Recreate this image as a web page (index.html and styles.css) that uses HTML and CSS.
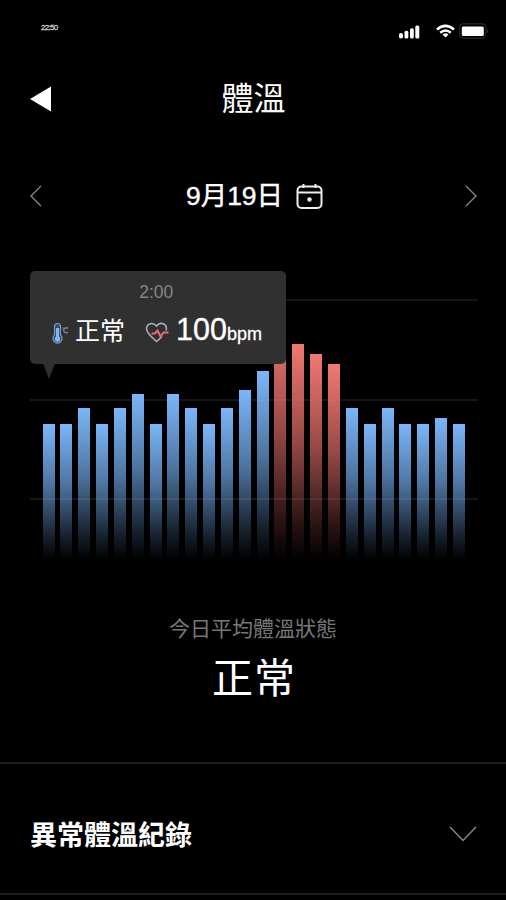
FILE: index.html
```html
<!DOCTYPE html>
<html lang="zh-Hant">
<head>
<meta charset="utf-8">
<title>體溫</title>
<link rel="stylesheet" href="styles.css">
</head>
<body>
<main class="screen">
  <div class="status">
    <span class="time">22:50</span>
    <div class="status-icons">
      <svg class="signal" width="22" height="15" viewBox="0 0 22 15" fill="#fff"><rect x="1" y="9" width="4" height="5.500" rx="1.800"/><rect x="6.500" y="6.800" width="3.800" height="7.700" rx="1.500"/><rect x="12" y="4.300" width="3.800" height="10.200" rx="1.500"/><rect x="17.300" y="1.500" width="4" height="13" rx="1.500"/></svg>
      <svg class="wifi" width="19" height="14" viewBox="0 0 19 14" fill="none" stroke="#fff" stroke-width="2.500"><path d="M1 5.500Q9.500-1.800 18 5.500M4.200 8.700Q9.500 4.300 14.800 8.700"/><path d="M6.500 10.500Q9.500 8 12.500 10.500L9.500 13.500Z" fill="#fff" stroke="none"/></svg>
      <svg class="battery" width="30" height="16" viewBox="0 0 30 16"><rect x=".7" y=".7" width="26" height="14.600" rx="4" fill="none" stroke="#222" stroke-width="1.400"/><rect x="2.800" y="3.500" width="22" height="9.500" rx="1.500" fill="#fff"/><path d="M28.300 5.800q1.600 2.200 0 4.400z" fill="#555"/></svg>
    </div>
  </div>
  <header class="header">
    <svg class="back" width="22" height="26" viewBox="0 0 22 26"><path d="M0 13 21 .5v25z" fill="#fff"/></svg>
    <h1>體溫</h1>
  </header>
  <nav class="date-nav">
    <svg width="12" height="22" viewBox="0 0 12 22"><path d="M11 1 1 11 11 21"/></svg>
    <div class="date"><span>9月19日</span>
      <svg class="calendar" width="27" height="27" viewBox="0 0 27 27"><rect x="1.500" y="3.500" width="24" height="21.500" rx="4"/><path d="M1.500 9.500h24M7.500 1v4M19.500 1v4"/><circle cx="13.500" cy="16.500" r="2.200" fill="#eee" stroke="none"/></svg>
    </div>
    <svg width="12" height="22" viewBox="0 0 12 22"><path d="M1 1 11 11 1 21"/></svg>
  </nav>
  <section class="chart">
    <div class="grid-lines"><i></i><i></i><i></i></div>
    <div class="bars" id="bars"></div>
    <div class="tooltip">
      <div class="tip-time">2:00</div>
      <div class="tip-row">
        <svg class="thermo" width="18" height="23" viewBox="0 0 18 23"><path d="M2.500 13V4.500a3 3 0 0 1 6 0V13a4.600 4.600 0 1 1-6 0Z" fill="#344d69" stroke="#8ba0b8" stroke-width="1.100"/><path d="M5.500 6v9" stroke="#79b9ff" stroke-width="3"/><circle cx="5.500" cy="17" r="2.700" fill="#79b9ff"/><path d="M16 6.500a2.500 2.500 0 1 0 0 3.500M10.500 6h1" fill="none" stroke="#7d8795" stroke-width="1.300"/></svg>
        <span class="tip-state">正常</span>
        <svg class="heart" width="25" height="22" viewBox="0 0 25 22" fill="none"><path d="M21 8.500C23 2 15.500-1 11.500 4 8 0 2 1 1.500 6.500c0 4.500 5 8.500 10 13 2.500-2 4-3.300 5.500-5" stroke="#a7b4cb" stroke-width="1.500"/><path d="M6.500 11.500h3.500l2.500-3 3 6 3-4H23.500" stroke="#f26969" stroke-width="2"/></svg>
        <span class="tip-value">100<small>bpm</small></span>
      </div>
    </div>
  </section>
  <section class="summary">
    <p>今日平均體溫狀態</p>
    <strong>正常</strong>
  </section>
  <section class="records">
    <h2>異常體溫紀錄</h2>
    <svg width="28" height="16" viewBox="0 0 28 16"><path d="M1 1 14 14.500 27 1"/></svg>
  </section>
</main>
<script src="chart.js"></script>
</body>
</html>
```
FILE: styles.css
```css
* { box-sizing: border-box; }
body { margin: 0; background: #000; color: #fff; font-family: "Liberation Sans", "Noto Sans CJK TC", sans-serif; }
svg { display: block; flex: none; }
.screen { width: 506px; height: 900px; overflow: hidden; display: flex; flex-direction: column; }
.status { height: 62px; padding: 23px 17px 0 41px; display: flex; justify-content: space-between; align-items: flex-start; }
.time { font-size: 8px; line-height: 10px; letter-spacing: -.7px; color: #ccc; -webkit-text-stroke: .3px #ccc; }
.status-icons { display: flex; align-items: center; }
.signal { margin-right: 16px; }
.wifi { margin-right: 4px; }
.header { height: 74px; padding: 0 30px; display: grid; grid-template-columns: 22px 1fr 22px; align-items: center; }
h1 { margin: 0; padding: 0 0 0 1px; text-align: center; font-size: 32px; line-height: 40px; font-weight: 400; }
.date-nav { height: 120px; padding: 0 29px 0 30px; display: flex; align-items: center; justify-content: space-between; }
.date-nav > svg { fill: none; stroke: #858585; stroke-width: 1.4; }
.date { display: flex; align-items: center; gap: 13px; padding-left: 2px; font-size: 26.5px; line-height: 36px; -webkit-text-stroke: .4px #fff; }
.calendar { fill: none; stroke: #eee; stroke-width: 2; }
.chart { height: 304px; margin: 0 28px 0 30px; position: relative; display: flex; align-items: flex-end; }
.grid-lines { position: absolute; inset: 43px 0 60px; display: flex; flex-direction: column; justify-content: space-between; }
.grid-lines i { height: 2px; background: #151515; }
.bars { width: 100%; padding: 0 13px 0 12.5px; display: flex; align-items: flex-end; justify-content: space-between; position: relative; }
.bar { width: 12px; background: linear-gradient(#7bb6fa, #77b2f5a6 45%, #77b2f52b 84%, #77b2f500); }
.bar.hot { background: linear-gradient(#f27872, #e8706ba6 45%, #e86c682b 84%, #e86c6800); }
.tooltip { position: absolute; left: 0; top: 15px; width: 255.5px; height: 93px; background: #303030; border-radius: 5px; padding-top: 10px; }
.tooltip::after { content: ""; position: absolute; left: 13px; top: 92px; width: 12px; height: 16px; background: #303030; clip-path: polygon(0 0, 100% 0, 50% 100%); }
.tip-time { text-align: center; font-size: 17.5px; line-height: 22px; color: #858585; padding-right: 3px; }
.tip-row { height: 42px; margin-top: 7px; padding-left: 22px; display: flex; align-items: center; }
.thermo { margin: 4px 5px 0 0; }
.tip-state { font-size: 25px; line-height: 36px; width: 50px; margin-right: 20px; }
.heart { margin: 3px 6px 0 0; }
.tip-value { font-size: 30.5px; line-height: 36px; -webkit-text-stroke: .3px #fff; }
.tip-value small { font-size: 18px; }
.summary { height: 202px; padding-top: 54px; text-align: center; }
.summary p { margin: 0; font-size: 21px; line-height: 30px; color: #777; }
.summary strong { display: block; font-size: 41px; line-height: 60px; font-weight: 400; letter-spacing: 1px; margin-top: 5px; padding-left: 2px; }
.records { height: 133px; border-top: 2px solid #1c1c1c; border-bottom: 2px solid #1c1c1c; padding: 10px 29px 0 30px; display: flex; align-items: center; justify-content: space-between; }
h2 { margin: 0; padding-top: 4px; font-size: 27px; line-height: 36px; font-weight: 700; }
.records svg { fill: none; stroke: #858585; stroke-width: 1.5; }
```
FILE: chart.js
```javascript
const heights = [136, 136, 152, 136, 152, 166, 136, 166, 152, 136, 152, 170, 189, 236, 216, 206, 196, 152, 136, 152, 136, 136, 142, 136];
const bars = document.getElementById("bars");
heights.forEach((height, hour) => {
  const bar = document.createElement("div");
  bar.className = hour >= 13 && hour <= 16 ? "bar hot" : "bar";
  bar.style.height = `${height}px`;
  bars.appendChild(bar);
});
```
